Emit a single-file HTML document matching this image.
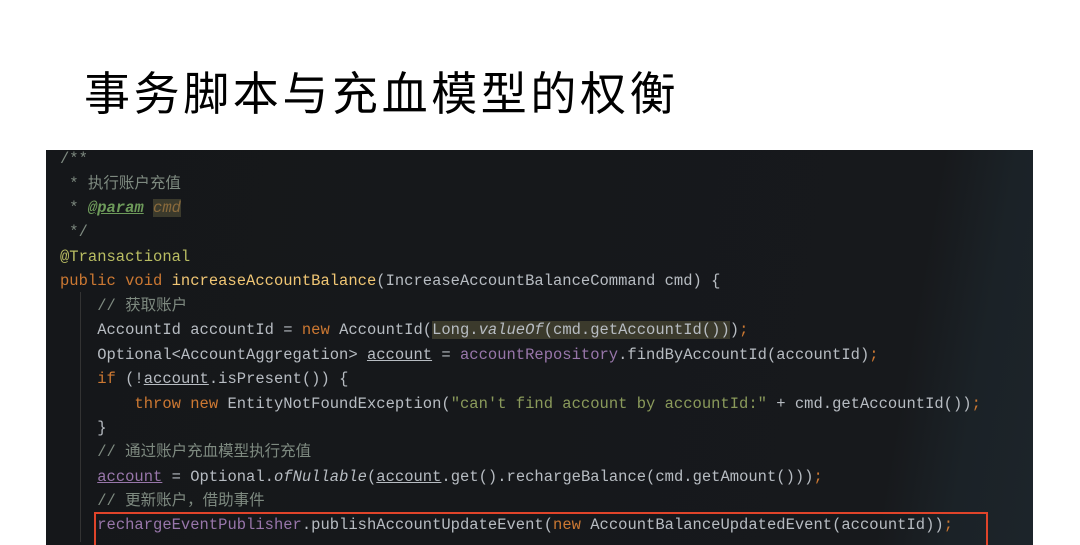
<!DOCTYPE html>
<html><head><meta charset="utf-8"><style>
html,body{margin:0;width:1080px;height:545px;overflow:hidden}
body{background:#fff;position:relative}
.t{position:absolute;left:84px;top:58px;font:46px "Noto Sans CJK SC",sans-serif;color:#000;letter-spacing:3.6px;white-space:nowrap}
.p{position:absolute;left:46px;top:150px;width:987px;height:395px;background:linear-gradient(100deg,#15171a 0%,#17191c 85%,#1b2227 92%,#1c242a 100%)}
.l{position:absolute;left:60px;font:15.5px "Liberation Mono","Noto Sans CJK SC",monospace;color:#b7bcc2;white-space:pre;line-height:20px}
.c{color:#7e8a80}.g{color:#6d9a5a}.k{color:#cc7832}.f{color:#f0c674}.y{color:#b9bd62}.pu{color:#9876aa}.s{color:#8a9a5b}
.u{text-decoration:underline}.i{font-style:italic}
.hl{background:#3b3a2c}
.box{position:absolute;left:94px;top:512px;width:890px;height:40px;border:2px solid #e0442a}
.guide{position:absolute;left:80px;width:1px;background:#333}
</style></head><body>
<div class="t">事务脚本与充血模型的权衡</div>
<div class="p"></div>
<div class="guide" style="top:292px;height:250px"></div>
<div class="l c" style="top:149px">/**</div>
<div class="l c" style="top:174px"> * 执行账户充值</div>
<div class="l" style="top:198px"><span class="c"> * </span><span class="g u i" style="font-weight:bold">@param</span> <span class="hl i" style="color:#8a6a3c">cmd</span></div>
<div class="l c" style="top:222px"> */</div>
<div class="l y" style="top:247px">@Transactional</div>
<div class="l" style="top:271px"><span class="k">public void </span><span class="f">increaseAccountBalance</span>(IncreaseAccountBalanceCommand cmd) {</div>
<div class="l c" style="top:296px">    // 获取账户</div>
<div class="l" style="top:320px">    AccountId accountId = <span class="k">new </span>AccountId(<span class="hl">Long.<span class="i">valueOf</span>(cmd.getAccountId())</span>)<span class="k">;</span></div>
<div class="l" style="top:345px">    Optional&lt;AccountAggregation&gt; <span class="u">account</span> = <span class="pu">accountRepository</span>.findByAccountId(accountId)<span class="k">;</span></div>
<div class="l" style="top:369px">    <span class="k">if </span>(!<span class="u">account</span>.isPresent()) {</div>
<div class="l" style="top:394px">        <span class="k">throw new </span>EntityNotFoundException(<span class="s">"can't find account by accountId:"</span> + cmd.getAccountId())<span class="k">;</span></div>
<div class="l" style="top:418px">    }</div>
<div class="l c" style="top:442px">    // 通过账户充血模型执行充值</div>
<div class="l" style="top:467px">    <span class="u pu">account</span> = Optional.<span class="i">ofNullable</span>(<span class="u">account</span>.get().rechargeBalance(cmd.getAmount()))<span class="k">;</span></div>
<div class="l c" style="top:491px">    // 更新账户，借助事件</div>
<div class="l" style="top:515px">    <span class="pu">rechargeEventPublisher</span>.publishAccountUpdateEvent(<span class="k">new </span>AccountBalanceUpdatedEvent(accountId))<span class="k">;</span></div>
<div class="box"></div>
</body></html>
